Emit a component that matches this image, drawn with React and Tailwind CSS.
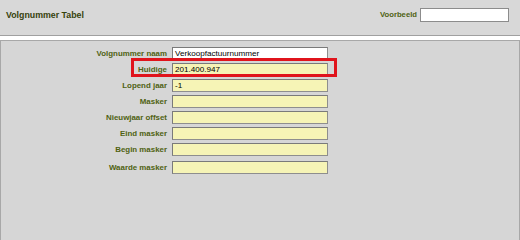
import React from 'react';

const rows = [
    { label: 'Volgnummer naam', value: 'Verkoopfactuurnummer', white: true },
    { label: 'Huidige', value: '201.400.947', mark: true },
    { label: 'Lopend jaar', value: '-1' },
    { label: 'Masker', value: '' },
    { label: 'Nieuwjaar offset', value: '' },
    { label: 'Eind masker', value: '' },
    { label: 'Begin masker', value: '' },
    { label: 'Waarde masker', value: '', gap: true },
];

export default function App() {
    return (
        <div className="w-[520px] h-[240px] bg-white flex flex-col font-['Liberation_Sans',Arial,sans-serif] overflow-hidden">
            {/* Kop */}
            <div className="h-[36px] shrink-0 bg-[#d8d8d8] border-b border-[#a0a0a0] flex items-start justify-between pl-[6px] pr-[11px]">
                <h1 className="mt-[10px] text-[8.8px] font-bold text-[#36420c] leading-[10px]">Volgnummer Tabel</h1>
                <div className="flex items-center gap-[3px] mt-[8px]">
                    <span className="text-[7.7px] font-bold text-[#4f6212]">Voorbeeld</span>
                    <input className="w-[89px] h-[14px] bg-white border border-[#8c8c8c] outline-none" />
                </div>
            </div>

            {/* Formulier */}
            <div className="mt-[4px] flex-1 bg-[#d6d6d6] border-t border-l border-r border-[#a8a8a8] pt-[6px]">
                {rows.map(row => (
                    <div key={row.label} className={`relative flex items-center gap-[5px] ${row.gap ? 'mt-[5px]' : 'mt-[3px]'} first:mt-0`}>
                        <label className="w-[166px] text-right text-[7.9px] font-bold text-[#4f6212] leading-[10px]">{row.label}</label>
                        <div className={`w-[156px] h-[13px] border border-[#8e8e8e] border-t-[#7a7a7a] border-l-[#7a7a7a] px-[2px] text-[8.1px] leading-[11px] text-black ${row.white ? 'bg-white' : 'bg-[#f6f4b6]'}`}>
                            {row.value}
                        </div>
                        {row.mark && (
                            <span className="absolute left-[130px] top-[-5px] w-[206px] h-[19px] border-[3px] border-[#e0141c]"></span>
                        )}
                    </div>
                ))}
            </div>
        </div>
    );
}
